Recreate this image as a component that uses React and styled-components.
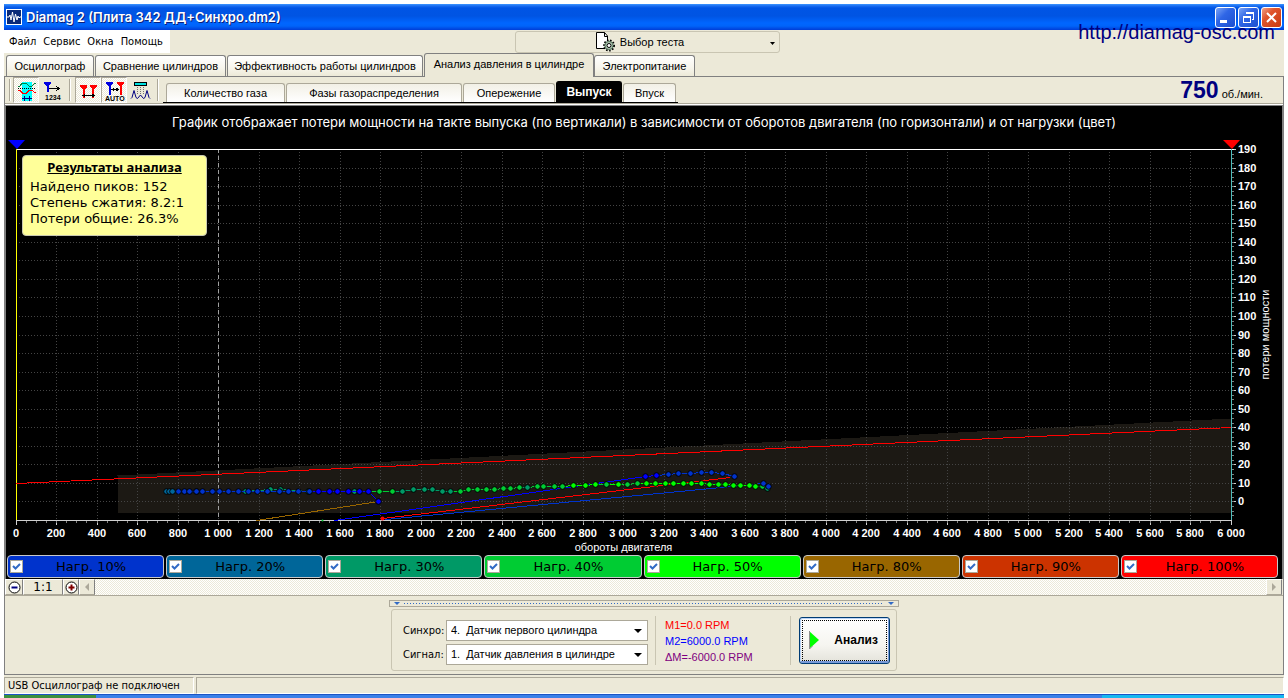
import React, { useLayoutEffect, useRef, useState } from 'react';
import styled, { createGlobalStyle, css } from 'styled-components';

const GlobalStyle = createGlobalStyle`
  * {
    box-sizing: border-box;
  }
  body {
    margin: 0;
    background-color: #ffffff;
    color: #000000;
    font-family: 'Liberation Sans', Arial, sans-serif;
    font-size: 11px;
  }
  button, select, input {
    font-family: inherit;
    font-size: inherit;
    color: inherit;
    margin: 0;
  }
`;

const tahoma = "'DejaVu Sans Condensed', Tahoma, sans-serif";
const verdana = "'DejaVu Sans', Verdana, sans-serif";
const noto = "'Noto Sans', 'Open Sans', sans-serif";
const inter = "Inter, 'Noto Sans', sans-serif";

const Page = styled.div`
  display: flex;
  flex-direction: column;
  min-height: 100vh;
  padding: 4px 4px 0;
`;

const Window = styled.div`
  position: relative;
  display: flex;
  flex-direction: column;
  flex: 1;
  background-color: #ece9d8;
`;

const TitleBar = styled.header`
  display: flex;
  align-items: center;
  height: 26px;
  padding: 0 2px;
  background: linear-gradient(#3c96ff 0, #1a6cf0 2px, #0055e5 4px, #0054e3 12px, #0066ff 19px, #0064fa 22px, #003dd7 26px);
`;

const WindowTitle = styled.h1`
  flex: 1;
  margin: 0 0 0 4px;
  color: #ffffff;
  font-family: ${inter};
  font-size: 13px;
  font-weight: 600;
  line-height: 20px;
  text-shadow: 1px 1px 0 #0a1f7a;
`;

const WindowButtons = styled.div`
  display: flex;
  gap: 2px;
`;

const WindowButton = styled.button`
  display: flex;
  width: 21px;
  height: 21px;
  padding: 0;
  border: 1px solid #ffffff;
  border-radius: 3px;
  background: ${({ $close }) => ($close
    ? 'linear-gradient(135deg, #f0a088 0, #e0552d 35%, #c93a10 100%)'
    : 'linear-gradient(135deg, #7ba4f5 0, #2f66e6 40%, #1c4fd0 100%)')};
`;

const SiteLink = styled.a`
  position: absolute;
  top: 16px;
  right: 9px;
  color: #000080;
  font-size: 20px;
  line-height: 24px;
  text-decoration: none;
`;

const MenuRow = styled.div`
  display: grid;
  grid-template-columns: 511px 265px 1fr;
  height: 23px;
`;

const Menu = styled.nav`
  display: flex;
  align-items: center;
  justify-self: start;
  gap: 7px;
  width: 166px;
  padding-left: 5px;
  background-color: #ffffff;
`;

const MenuItem = styled.button`
  padding: 0;
  border: 0;
  background: none;
  font-family: ${tahoma};
  font-size: 11px;
`;

const TestPicker = styled.button`
  display: flex;
  align-items: center;
  justify-content: center;
  gap: 4px;
  position: relative;
  height: 22px;
  margin-top: 1px;
  padding: 0 16px 0 0;
  border: 1px solid #c9c5b2;
  border-radius: 3px;
  background: none;
`;

const PickerArrow = styled.svg`
  position: absolute;
  right: 4px;
  top: 10px;
`;

const TabRow = styled.nav`
  display: flex;
  align-items: flex-end;
  height: 24px;
  padding-left: 2px;
  border-bottom: 1px solid #808080;
`;

const Tab = styled.button`
  width: ${({ $width }) => $width}px;
  height: 21px;
  margin-right: 1px;
  padding: 0;
  border: 1px solid #808080;
  border-bottom: 0;
  border-radius: 3px 3px 0 0;
  background: linear-gradient(#ffffff, #f7f5ec 60%, #ece9d8);
  white-space: nowrap;
  ${({ $active }) => $active && css`
    height: 24px;
    margin-bottom: -1px;
    margin-right: 0;
    padding-bottom: 3px;
    background: #ece9d8;
  `}
`;

const Body = styled.main`
  display: flex;
  flex-direction: column;
  flex: 1;
  border: 1px solid #808080;
  border-top: 0;
`;

const Toolbar = styled.div`
  display: flex;
  align-items: center;
  height: 28px;
  padding-left: 2px;
  padding-bottom: 1px;
  border-bottom: 1px solid #ffffff;
  box-shadow: inset 0 -1px 0 #aca899;
`;

const Grip = styled.span`
  width: 2px;
  height: 22px;
  margin: 0 ${({ $space }) => $space}px;
  border-left: 1px solid #aca899;
  border-right: 1px solid #ffffff;
`;

const ToolButton = styled.button`
  display: flex;
  width: 26px;
  height: 26px;
  padding: 0;
  border: 1px solid transparent;
  background: none;
  ${({ $pressed }) => $pressed && css`
    border-color: #aca899 #ffffff #ffffff #aca899;
    background: repeating-conic-gradient(#ffffff 0 25%, #ece9d8 0 50%) 0 0 / 2px 2px;
  `}
`;

const SubTabs = styled.nav`
  display: flex;
  align-items: flex-end;
  align-self: stretch;
  gap: 1px;
  padding: 0 2px 0 3px;
  border-bottom: 1px solid #000000;
`;

const SubTab = styled.button`
  width: ${({ $width }) => $width}px;
  height: 19px;
  padding: 0;
  border: 1px solid #aca899;
  border-bottom: 0;
  border-radius: 3px 3px 0 0;
  background: linear-gradient(#f2f0e6, #ffffff);
  white-space: nowrap;
  ${({ $active }) => $active && css`
    height: 21px;
    border-color: #000000;
    background: #000000;
    color: #ffffff;
    font-size: 12px;
    font-weight: 700;
  `}
`;

const Speed = styled.output`
  display: flex;
  align-items: baseline;
  gap: 3px;
  margin-left: auto;
  margin-right: 20px;
`;

const SpeedValue = styled.strong`
  color: #000080;
  font-size: 23px;
  line-height: 26px;
`;

const ChartPanel = styled.section`
  display: flex;
  flex-direction: column;
  flex: 1;
  padding-bottom: 1px;
  border: solid #808080;
  border-width: 1px 1px 0;
  background-color: #000000;
`;

const ChartTitle = styled.h2`
  margin: 0;
  padding-top: 7px;
  height: 32px;
  color: #ffffff;
  font-family: ${inter};
  font-size: 13px;
  font-weight: 400;
  line-height: 18px;
  text-align: center;
  white-space: nowrap;
`;

const PlotArea = styled.div`
  position: relative;
  flex: 1 0 416px;
`;

const PlotSvg = styled.svg`
  position: absolute;
  inset: 0;
  width: 100%;
  height: 100%;
  font-size: 11px;
  font-weight: 700;
`;

const Results = styled.aside`
  position: absolute;
  top: 17px;
  left: 16px;
  width: 185px;
  height: 81px;
  padding: 3px 7px;
  border: 1px solid #c8c8b0;
  border-radius: 4px;
  background-color: #ffff99;
  font-family: ${verdana};
  font-size: 13px;
  line-height: 16px;
`;

const ResultsTitle = styled.h3`
  margin: 0 0 4px;
  font-family: ${noto};
  font-size: 13px;
  line-height: 16px;
  text-align: center;
  text-decoration: underline;
`;

const ResultLine = styled.p`
  margin: 0;
  white-space: nowrap;
`;

const Legend = styled.div`
  display: grid;
  grid-template-columns: repeat(8, 1fr);
  gap: 2px;
  padding: 0 4px 0 1px;
`;

const LegendItem = styled.label`
  display: flex;
  align-items: center;
  height: 23px;
  padding: 0 2px;
  border: 1px solid #c8c8c8;
  border-radius: 4px;
  background-color: ${({ $color }) => $color};
  font-family: ${verdana};
  font-size: 13px;
`;

const LegendText = styled.span`
  flex: 1;
  padding-right: 2px;
  text-align: center;
`;

const CheckWrap = styled.span`
  position: relative;
  display: flex;
`;

const CheckBox = styled.input`
  appearance: none;
  width: 13px;
  height: 13px;
  border: 1px solid #aca899;
  background-color: #ffffff;
  & + svg {
    display: none;
  }
  &:checked + svg {
    display: block;
  }
`;

const CheckMark = styled.svg`
  position: absolute;
  inset: 0;
  pointer-events: none;
`;

const ScrollRow = styled.div`
  display: flex;
  height: 17px;
  border-bottom: 1px solid #aca899;
  padding-right: 1px;
`;

const ScrollButton = styled.button`
  display: flex;
  align-items: center;
  justify-content: center;
  width: ${({ $width }) => $width || 16}px;
  padding: 0;
  border: 1px solid;
  border-color: #ffffff #808080 #aca899 #ffffff;
  background-color: #ece9d8;
  font-family: ${verdana};
  font-size: 12px;
  line-height: 12px;
`;

const ScrollTrack = styled.div`
  flex: 1;
  background: repeating-conic-gradient(#ffffff 0 25%, #ece9d8 0 50%) 0 0 / 2px 2px;
`;

const Controls = styled.section`
  display: flex;
  flex-direction: column;
  align-items: center;
  gap: 2px;
  padding: 4px 0 3px;
`;

const Splitter = styled.div`
  display: flex;
  align-items: center;
  gap: 4px;
  width: 510px;
  height: 7px;
  padding: 0 4px;
  border: 1px solid #aca899;
`;

const SplitterDots = styled.span`
  flex: 1;
  height: 1px;
  background: repeating-linear-gradient(90deg, #316ac5 0 1px, transparent 1px 3px);
`;

const Group = styled.div`
  display: flex;
  align-items: center;
  width: 506px;
  height: 62px;
  padding: 0 6px 0 11px;
  border: 1px solid #c9c5b2;
  border-radius: 3px;
`;

const Fields = styled.div`
  display: grid;
  grid-template-columns: 43px 202px;
  row-gap: 3px;
  align-items: center;
  padding-top: 4px;
`;

const FieldLabel = styled.label`
  font-family: ${tahoma};
`;

const SelectWrap = styled.div`
  position: relative;
  display: flex;
  svg {
    position: absolute;
    right: 6px;
    top: 9px;
    pointer-events: none;
  }
`;

const Select = styled.select`
  appearance: none;
  width: 100%;
  height: 21px;
  padding: 0 4px;
  border: 1px solid #aca899;
  border-radius: 0;
  background-color: #ffffff;
  white-space: pre;
`;

const Readings = styled.div`
  width: 137px;
  height: 49px;
  margin: 0 8px 0 7px;
  padding: 1px 0 0 9px;
  border-left: 1px solid #c9c5b2;
  border-right: 1px solid #c9c5b2;
  line-height: 16px;
`;

const Reading = styled.div`
  color: ${({ $color }) => $color};
`;

const AnalyzeButton = styled.button`
  display: flex;
  align-items: center;
  gap: 14px;
  width: 91px;
  height: 47px;
  padding: 0 8px;
  border: 1px solid #003c74;
  border-radius: 3px;
  background: linear-gradient(#ffffff, #f6f5f0 60%, #e3e2da);
  box-shadow: inset 1px 1px 0 #bcd4f6, inset -1px -2px 0 #7a9ad8;
  outline: 1px dotted #000000;
  outline-offset: -4px;
  font-size: 12px;
  font-weight: 700;
`;

const StatusBar = styled.footer`
  display: flex;
  gap: 2px;
  height: 19px;
  padding-top: 2px;
  font-family: ${tahoma};
  line-height: 15px;
`;

const StatusCell = styled.div`
  flex: ${({ $width }) => ($width ? `0 0 ${$width}px` : 1)};
  padding-left: 3px;
  border: 1px solid;
  border-color: #aca899 #ffffff #ffffff #aca899;
  white-space: nowrap;
`;

const Taskbar = styled.div`
  display: grid;
  grid-template-columns: 92px 1fr 182px;
  height: 4px;
  border-top: 1px solid #1c54c4;
`;

const TaskbarPart = styled.div`
  background-color: ${({ $color }) => $color};
`;

const loadColors = {
  0: '#0000ff',
  10: '#0033cc',
  20: '#006699',
  30: '#009966',
  40: '#00cc33',
  50: '#00ff00',
  80: '#996600',
  90: '#cc3300',
  100: '#ff0000',
};

const loads = [10, 20, 30, 40, 50, 80, 90, 100];

// [rpm, power loss, load]
const backPoints = [
  [889, 5.4, 30], [1131, 5.4, 30], [1259, 6.6, 30], [1304, 6.5, 30],
  [1444, 5.9, 30], [1674, 5.4, 30], [1797, 5.9, 40], [1857, 5.9, 40],
  [1911, 5.9, 30], [1965, 6.5, 30], [2015, 6.5, 30], [2059, 6.5, 30],
  [2104, 5.9, 30], [2148, 5.9, 30], [2193, 5.9, 40], [2237, 6.5, 40],
  [2281, 6.5, 40], [2321, 6.5, 40], [2365, 6.5, 40], [2405, 7, 40],
  [2444, 7, 40], [2484, 7.6, 40], [2528, 7.6, 30], [2573, 8.1, 40],
  [2607, 8.1, 40], [2657, 8.1, 40], [2701, 8.1, 40], [2755, 8.6, 50],
  [2810, 8.6, 50], [2864, 9.2, 50], [2918, 9.2, 40], [2973, 9.2, 50],
  [3022, 9.2, 40], [3067, 9.7, 40], [3116, 9.7, 50], [3160, 9.7, 50],
  [3205, 9.7, 50], [3249, 9.7, 50], [3294, 9.7, 50], [3338, 9.7, 50],
  [3383, 9.7, 50], [3427, 9.2, 50], [3467, 9.2, 50], [3506, 9.2, 50],
  [3541, 8.6, 50], [3580, 8.6, 50], [3620, 8.6, 50], [3654, 8.1, 50],
  [3684, 8.1, 40], [3709, 7, 30],
];

const idlePoints = [
  [741, 5.4, 20], [757, 5.4, 20], [775, 5.4, 20], [800, 5.4, 10],
  [830, 5.4, 10], [859, 5.9, 10], [889, 5.9, 10], [923, 5.9, 10],
  [968, 5.9, 10], [1007, 5.9, 10], [1050, 5.9, 10], [1101, 5.9, 10],
  [1146, 5.9, 10], [1195, 5.9, 10], [1244, 5.9, 10], [1299, 5.9, 10],
  [1348, 5.4, 10], [1397, 5.4, 10], [1447, 5.4, 10], [1496, 5.4, 0],
  [1546, 5.9, 0], [1590, 5.9, 0], [1644, 5.9, 0], [1694, 5.9, 0],
  [1743, 5.9, 0], [1792, 0, 0],
];

const topPoints = [
  [3111, 13.7, 0], [3165, 14, 0], [3220, 14.6, 10], [3274, 15.1, 10],
  [3333, 15.1, 10], [3383, 15.7, 10], [3437, 15.7, 10], [3491, 15.1, 10],
  [3546, 13.7, 10],
];

const tailPoints = [[3689, 9.7, 10], [3718, 8.1, 10]];

const links = [
  { from: [1186, -10], to: [1792, 0], load: 80 },
  { from: [1575, -10], to: [3111, 13.7], load: 0 },
  { from: [1825, -9.4], to: [3689, 9.7], load: 10 },
  { from: [1812, -9], to: [3530, 13.2], load: 100 },
];

const range = (from, to, step) => {
  const values = [];
  for (let v = from; v <= to; v += step) values.push(v);
  return values;
};

const formatRpm = (v) => (v < 1000 ? `${v}` : `${Math.floor(v / 1000)} ${`${v % 1000}`.padStart(3, '0')}`);

const Trace = ({ points, x, y }) => (
  <g>
    {points.slice(1).map((p, i) => (
      <line
        key={p[0]}
        x1={x(points[i][0])}
        y1={y(points[i][1])}
        x2={x(p[0])}
        y2={y(p[1])}
        stroke={loadColors[p[2]]}
        shapeRendering="crispEdges"
      />
    ))}
    {points.map((p) => (
      <circle key={p[0]} cx={x(p[0])} cy={y(p[1])} r="2.800" fill={loadColors[p[2]]} stroke="#000" />
    ))}
  </g>
);

const Plot = () => {
  const ref = useRef(null);
  const [size, setSize] = useState({ width: 1276, height: 416 });

  useLayoutEffect(() => {
    const measure = () => {
      const box = ref.current.getBoundingClientRect();
      setSize({ width: Math.round(box.width), height: Math.round(box.height) });
    };
    measure();
    const observer = new ResizeObserver(measure);
    observer.observe(ref.current);
    return () => observer.disconnect();
  }, []);

  const left = 10;
  const right = size.width - 51;
  const top = 11;
  const bottom = size.height - 35;
  const x = (rpm) => Math.floor(left + ((right - left) * rpm) / 6000) + 0.5;
  const y = (loss) => Math.round(bottom - ((bottom - top) * (loss + 10)) / 200) + 0.5;

  return (
    <PlotArea ref={ref}>
      <PlotSvg role="img" aria-label="Потери мощности">
        <g shapeRendering="crispEdges" fill="none">
          <polygon
            points={`${x(500)},${y(14.5)} ${x(6000)},${y(45)} ${x(6000)},${y(-5.5)} ${x(500)},${y(-5.5)}`}
            fill="#1c1914"
          />
          <g stroke="#444" strokeDasharray="1 2">
            {range(200, 5800, 200).map((v) => (
              <line key={v} x1={x(v)} x2={x(v)} y1={top} y2={bottom} />
            ))}
            {range(0, 180, 10).map((v) => (
              <line key={v} x1={left} x2={right} y1={y(v)} y2={y(v)} />
            ))}
          </g>
          <line x1={x(1000)} x2={x(1000)} y1={top} y2={bottom} stroke="#a0a0a0" strokeDasharray="4 3" />
          <g stroke="#d0d0d0">
            <line x1={left} x2={right} y1={y(-10)} y2={y(-10)} />
            {range(0, 6000, 200).map((v) => (
              <line key={v} x1={x(v)} x2={x(v)} y1={bottom} y2={bottom + 5} />
            ))}
            {range(0, 190, 10).map((v) => (
              <line key={v} x1={right} x2={right + 5} y1={y(v)} y2={y(v)} />
            ))}
          </g>
          <g stroke="#808080">
            {range(50, 5950, 50).map((v) => (
              <line key={v} x1={x(v)} x2={x(v)} y1={bottom + 1} y2={bottom + 3} />
            ))}
            {range(-7.5, 187.5, 2.5).map((v) => (
              <line key={v} x1={right + 1} x2={right + 3} y1={y(v)} y2={y(v)} />
            ))}
          </g>
          <line x1={left} x2={right + 3} y1={y(190)} y2={y(190)} stroke="#fff" />
          <line x1={x(0)} x2={x(0)} y1={top} y2={bottom} stroke="#ff0" />
          <line x1={x(6000)} x2={x(6000)} y1={top} y2={bottom} stroke="#4cbcbc" />
          <line x1={x(0)} y1={y(9.7)} x2={x(6000)} y2={y(40)} stroke="#f00" />
          {links.map((l) => (
            <line
              key={l.load}
              x1={x(l.from[0])}
              y1={y(l.from[1])}
              x2={x(l.to[0])}
              y2={y(l.to[1])}
              stroke={loadColors[l.load]}
            />
          ))}
        </g>
        <Trace points={backPoints} x={x} y={y} />
        <Trace points={idlePoints} x={x} y={y} />
        <Trace points={topPoints} x={x} y={y} />
        <Trace points={tailPoints} x={x} y={y} />
        <circle cx={x(1812)} cy={y(-9)} r="2" fill="#f00" />
        <circle cx={x(1516)} cy={y(-10)} r="1" fill="#00cc33" />
        <polygon points={`${left - 8},2 ${left + 9},2 ${left + 1},11`} fill="#00f" />
        <polygon points={`${right - 8},2 ${right + 9},2 ${right + 1},11`} fill="#f00" />
        <g fill="#fff">
          {range(0, 6000, 200).map((v) => (
            <text key={v} x={x(v) - 0.5} y={bottom + 17} textAnchor="middle">{formatRpm(v)}</text>
          ))}
          {range(0, 190, 10).map((v) => (
            <text key={v} x={right + 7} y={y(v) + 3.5}>{v}</text>
          ))}
          <g textAnchor="middle" fontWeight="400">
            <text x={(left + right) / 2} y={bottom + 31}>обороты двигателя</text>
            <text transform={`translate(${right + 38} ${(top + bottom) / 2}) rotate(-90)`}>
              потери мощности
            </text>
          </g>
        </g>
      </PlotSvg>
      <Results>
        <ResultsTitle>Результаты анализа</ResultsTitle>
        <ResultLine>Найдено пиков: 152</ResultLine>
        <ResultLine>Степень сжатия: 8.2:1</ResultLine>
        <ResultLine>Потери общие: 26.3%</ResultLine>
      </Results>
    </PlotArea>
  );
};

const AppIcon = () => (
  <svg width="16" height="16" viewBox="0 0 16 16">
    <rect x="0.5" y="0.5" width="15" height="15" fill="#0a2a78" stroke="#fff" />
    <path d="M1 8h2l1-2 1 5 1.5-8L8 13l1.5-8L11 11l1-4 1 2 1-1h1" fill="none" stroke="#fff" />
  </svg>
);

const MinimizeIcon = () => (
  <svg width="19" height="19"><path d="M4 13.500h7" stroke="#fff" strokeWidth="3" /></svg>
);

const RestoreIcon = () => (
  <svg width="19" height="19" fill="none" stroke="#fff" shapeRendering="crispEdges">
    <path d="M7 6V4.500h7.500V11H13M7 5.500h7" />
    <path d="M4.500 8.500h7v6h-7zM4 9.500h8" />
  </svg>
);

const CloseIcon = () => (
  <svg width="19" height="19"><path d="M5 5l9 9M14 5l-9 9" stroke="#fff" strokeWidth="2" /></svg>
);

const TestIcon = () => (
  <svg width="21" height="20" viewBox="0 0 21 20">
    <path d="M1.500 .5h8l3 3.500v12.500h-11z" fill="#fff" stroke="#000" />
    <path d="M9.500 .5v4h3" fill="none" stroke="#000" />
    <circle cx="14" cy="13.500" r="5" fill="#b5cdb8" stroke="#000" strokeWidth="2" strokeDasharray="1.500 1.500" />
    <circle cx="14" cy="13.500" r="4" fill="#b5cdb8" stroke="#5c7a62" />
    <circle cx="14" cy="13.500" r="2" fill="#fff" stroke="#000" />
  </svg>
);

const DropArrow = () => (
  <svg width="8" height="4" viewBox="0 0 8 4"><path d="M0 0h8L4 4z" /></svg>
);

const WavesIcon = () => (
  <svg width="24" height="24" shapeRendering="crispEdges" fill="none">
    <rect x="8" y="4" width="10" height="19" fill="#00ffff" />
    <path d="M4 8h2l2-3h4l3 3h3l3-3h1" stroke="#008040" />
    <path d="M4 10.500h18" stroke="#000" strokeDasharray="1 1" />
    <path d="M4 12.500h2l3 3h3l3-3h3l3 2h1" stroke="#f00" />
    <path d="M8 20.500h10M10.500 18v5M15.500 18v5" stroke="#000080" />
  </svg>
);

const CountIcon = () => (
  <svg width="24" height="24" shapeRendering="crispEdges">
    <path d="M4 4h7v2L8.500 8v6h-2V8L4 6z" fill="#0000e0" />
    <path d="M9 10.500h10M16 8l3 2.500-3 2.500" fill="none" stroke="#000" />
    <text x="5" y="22" fontSize="7" fontWeight="700">1234</text>
  </svg>
);

const MarkersIcon = () => (
  <svg width="24" height="24" shapeRendering="crispEdges">
    <path d="M4 7h7v2l-2 2v9H7v-9L4 9zM14 7h7v2l-3 2v9h-2v-9l-2-2z" fill="#f00" />
    <path d="M8 17.500h9" stroke="#000" />
    <path d="M6 17.500l3-2v4zM19 17.500l-3-2v4z" fill="#000" />
  </svg>
);

const AutoIcon = () => (
  <svg width="24" height="24" shapeRendering="crispEdges">
    <path d="M4 4h7v2L8.500 8v9h-2V8L4 6z" fill="#0000e0" />
    <path d="M15 4h7v2l-2.500 2v9h-2V8L15 6z" fill="#f00" />
    <path d="M9 11.500h8" stroke="#000" />
    <path d="M9 11.500l3-2v4zM17 11.500l-3-2v4z" fill="#000" />
    <text x="3" y="23" fontSize="7" fontWeight="700">AUTO</text>
  </svg>
);

const PeaksIcon = () => (
  <svg width="24" height="24" fill="none">
    <rect x="6.500" y="4.500" width="12" height="3" fill="#00e0e0" stroke="#000" />
    <path d="M9.500 9v7M12.500 9v7M15.500 9v7" stroke="#707070" strokeDasharray="1 1" />
    <path d="M3 20.500l1-1 2-7 2 7 1.500 1 3-3.500 3 3.500 1.500-1 2-7 2 7 1 1" stroke="#000080" />
  </svg>
);

const tools = [
  { label: 'Область', icon: <WavesIcon />, pressed: true },
  { label: 'Нумерация', icon: <CountIcon />, gap: true },
  { label: 'Маркеры', icon: <MarkersIcon />, pressed: true },
  { label: 'Авто', icon: <AutoIcon />, pressed: true },
  { label: 'Пики', icon: <PeaksIcon />, gap: true },
];

const tabs = [
  ['Осциллограф', 88],
  ['Сравнение цилиндров', 131],
  ['Эффективность работы цилиндров', 196],
  ['Анализ давления в цилиндре', 170],
  ['Электропитание', 101],
];

const subTabs = [
  ['Количество газа', 119],
  ['Фазы газораспределения', 176],
  ['Опережение', 92],
  ['Выпуск', 66],
  ['Впуск', 53],
];

const ZoomIcon = ({ plus }) => (
  <svg width="13" height="13" fill="none">
    <circle cx="6.500" cy="6.500" r="5.500" fill="#fff" stroke="#000" />
    <path d={plus ? 'M3.500 6.500h6M6.500 3.500v6' : 'M3.500 6.500h6'} stroke={plus ? '#800000' : '#000080'} strokeWidth="2" />
  </svg>
);

const ScrollArrow = ({ right }) => (
  <svg width="8" height="9">
    <path d={right ? 'M2 0v8l4-4z' : 'M6 0v8L2 4z'} fill="#aca899" />
  </svg>
);

const SplitterArrow = () => (
  <svg width="6" height="3"><path d="M0 0h6L3 3z" fill="#316ac5" /></svg>
);

const SelectField = ({ id, label, value }) => (
  <>
    <FieldLabel htmlFor={id}>{label}</FieldLabel>
    <SelectWrap>
      <Select id={id}>
        <option>{value}</option>
      </Select>
      <DropArrow />
    </SelectWrap>
  </>
);

const App = () => {
  const [activeTab, setActiveTab] = useState(3);
  const [activeSubTab, setActiveSubTab] = useState(3);

  return (
    <Page>
      <GlobalStyle />
      <Window>
        <TitleBar>
          <AppIcon />
          <WindowTitle>Diamag 2 (Плита 342 ДД+Синхро.dm2)</WindowTitle>
          <WindowButtons>
            <WindowButton aria-label="Свернуть"><MinimizeIcon /></WindowButton>
            <WindowButton aria-label="Восстановить"><RestoreIcon /></WindowButton>
            <WindowButton aria-label="Закрыть" $close><CloseIcon /></WindowButton>
          </WindowButtons>
        </TitleBar>
        <SiteLink href="http://diamag-osc.com">http://diamag-osc.com</SiteLink>

        <MenuRow>
          <Menu>
            {['Файл', 'Сервис', 'Окна', 'Помощь'].map((item) => (
              <MenuItem key={item}>{item}</MenuItem>
            ))}
          </Menu>
          <TestPicker>
            <TestIcon />
            Выбор теста
            <PickerArrow width="5" height="3"><path d="M0 0h5L2.500 3z" /></PickerArrow>
          </TestPicker>
        </MenuRow>

        <TabRow>
          {tabs.map(([name, width], i) => (
            <Tab key={name} $width={width} $active={i === activeTab} onClick={() => setActiveTab(i)}>
              {name}
            </Tab>
          ))}
        </TabRow>

        <Body>
          <Toolbar>
            <Grip $space={2} />
            {tools.map((tool) => (
              <React.Fragment key={tool.label}>
                <ToolButton aria-label={tool.label} $pressed={tool.pressed}>{tool.icon}</ToolButton>
                {tool.gap && <Grip $space={4} />}
              </React.Fragment>
            ))}
            <SubTabs>
              {subTabs.map(([name, width], i) => (
                <SubTab key={name} $width={width} $active={i === activeSubTab} onClick={() => setActiveSubTab(i)}>
                  {name}
                </SubTab>
              ))}
            </SubTabs>
            <Speed>
              <SpeedValue>750</SpeedValue>
              об./мин.
            </Speed>
          </Toolbar>

          <ChartPanel>
            <ChartTitle>
              График отображает потери мощности на такте выпуска (по вертикали) в зависимости от оборотов двигателя (по горизонтали) и от нагрузки (цвет)
            </ChartTitle>
            <Plot />
            <Legend>
              {loads.map((load) => (
                <LegendItem key={load} $color={loadColors[load]}>
                  <CheckWrap>
                    <CheckBox type="checkbox" defaultChecked />
                    <CheckMark width="13" height="13">
                      <path d="M3 6l2.500 2.500L10 4" fill="none" stroke="#316ac5" strokeWidth="2" />
                    </CheckMark>
                  </CheckWrap>
                  <LegendText>Нагр. {load}%</LegendText>
                </LegendItem>
              ))}
            </Legend>
          </ChartPanel>

          <ScrollRow>
            <ScrollButton $width={18} aria-label="Уменьшить"><ZoomIcon /></ScrollButton>
            <ScrollButton $width={40}>1:1</ScrollButton>
            <ScrollButton aria-label="Увеличить"><ZoomIcon plus /></ScrollButton>
            <ScrollButton aria-label="Влево"><ScrollArrow /></ScrollButton>
            <ScrollTrack />
            <ScrollButton aria-label="Вправо"><ScrollArrow right /></ScrollButton>
          </ScrollRow>

          <Controls>
            <Splitter>
              <SplitterArrow />
              <SplitterDots />
              <SplitterArrow />
            </Splitter>
            <Group>
              <Fields>
                <SelectField id="sync" label="Синхро:" value={'4.\u00a0\u00a0Датчик первого цилиндра'} />
                <SelectField id="signal" label="Сигнал:" value={'1.\u00a0\u00a0Датчик давления в цилиндре'} />
              </Fields>
              <Readings>
                <Reading $color="#ff0000">M1=0.0 RPM</Reading>
                <Reading $color="#0000ff">M2=6000.0 RPM</Reading>
                <Reading $color="#800080">ΔM=-6000.0 RPM</Reading>
              </Readings>
              <AnalyzeButton>
                <svg width="12" height="20">
                  <path d="M1 1v18l10-9z" fill="#00ff00" />
                  <path d="M1.500 1v18l3-3" fill="none" stroke="#909090" />
                </svg>
                Анализ
              </AnalyzeButton>
            </Group>
          </Controls>
        </Body>

        <StatusBar>
          <StatusCell $width={190}>USB Осциллограф не подключен</StatusCell>
          <StatusCell />
        </StatusBar>
        <Taskbar>
          <TaskbarPart $color="#3c8f3c" />
          <TaskbarPart $color="#3a80e8" />
          <TaskbarPart $color="#18b8f0" />
        </Taskbar>
      </Window>
    </Page>
  );
};

export default App;
